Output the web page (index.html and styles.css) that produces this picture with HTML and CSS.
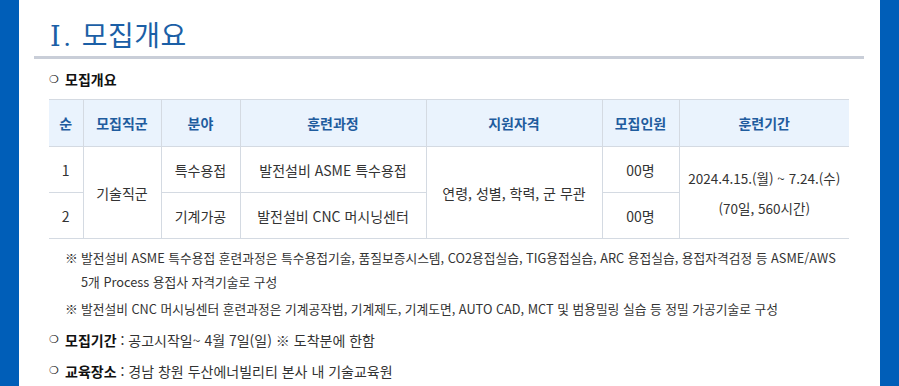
FILE: index.html
```html
<!DOCTYPE html>
<html lang="ko">
<head>
<meta charset="utf-8">
<link rel="stylesheet" href="styles.css">
</head>
<body>
<div class="page">
  <div class="bar"></div>
  <main class="content">
    <h1 class="title"><span class="roman">Ⅰ.</span> 모집개요</h1>
    <div class="rule"></div>
    <div class="inner">
      <p class="sub"><span class="bullet">❍</span><b>모집개요</b></p>
      <table class="grid">
        <colgroup>
          <col class="c1"><col class="c2"><col class="c3"><col class="c4"><col class="c5"><col class="c6"><col class="c7">
        </colgroup>
        <thead>
          <tr><th>순</th><th>모집직군</th><th>분야</th><th>훈련과정</th><th>지원자격</th><th>모집인원</th><th>훈련기간</th></tr>
        </thead>
        <tbody>
          <tr>
            <td>1</td>
            <td rowspan="2">기술직군</td>
            <td>특수용접</td>
            <td>발전설비 ASME 특수용접</td>
            <td rowspan="2">연령, 성별, 학력, 군 무관</td>
            <td>00명</td>
            <td rowspan="2" class="period">2024.4.15.(월) ~ 7.24.(수)<br>(70일, 560시간)</td>
          </tr>
          <tr>
            <td>2</td>
            <td>기계가공</td>
            <td>발전설비 CNC 머시닝센터</td>
            <td>00명</td>
          </tr>
        </tbody>
      </table>
      <div class="notes">
        <p class="note"><span class="mark">※</span><span>발전설비 ASME 특수용접 훈련과정은 특수용접기술, 품질보증시스템, CO2용접실습, TIG용접실습, ARC 용접실습, 용접자격검정 등 ASME/AWS 5개 Process 용접사 자격기술로 구성</span></p>
        <p class="note"><span class="mark">※</span><span>발전설비 CNC 머시닝센터 훈련과정은 기계공작법, 기계제도, 기계도면, AUTO CAD, MCT 및 범용밀링 실습 등 정밀 가공기술로 구성</span></p>
      </div>
      <p class="info"><span class="bullet">❍</span><b>모집기간</b> : 공고시작일~ 4월 7일(일) ※ 도착분에 한함</p>
      <p class="info"><span class="bullet">❍</span><b>교육장소</b> : 경남 창원 두산에너빌리티 본사 내 기술교육원</p>
    </div>
  </main>
  <div class="bar"></div>
</div>
</body>
</html>
```

FILE: styles.css
```css
* { box-sizing: border-box; }
html, body { margin: 0; padding: 0; background: #fff; }
body {
  font-family: "Noto Sans CJK KR", "Noto Sans", sans-serif;
  color: #333;
  width: 899px;
  height: 386px;
  overflow: hidden;
}
.page {
  display: flex;
  height: 386px;
}
.bar {
  width: 19px;
  flex: none;
  background: #005eb8;
}
.content {
  flex: 1;
  padding: 0 16px 0 15px;
}
.title {
  margin: 0;
  padding: 16px 0 0 16px;
  height: 56px;
  font-size: 28px;
  line-height: 36px;
  font-weight: 400;
  color: #1b5fa6;
  letter-spacing: 0.5px;
}
.roman {
  font-family: "Liberation Serif", "DejaVu Serif", serif;
  font-size: 27px;
  letter-spacing: 3px;
}
.rule {
  height: 3px;
  background: #c9ced8;
}
.inner {
  padding: 0 15px;
}
.sub {
  margin: 0;
  padding-left: 0;
  height: 40px;
  display: flex;
  align-items: center;
  font-size: 14px;
  color: #111;
}
.bullet {
  font-family: "DejaVu Sans", sans-serif;
  font-size: 11px;
  width: 16px;
  color: #222;
}
.grid {
  width: 800px;
  border-collapse: collapse;
  table-layout: fixed;
  font-size: 14px;
  border-top: 1px solid #ccd0d6;
  border-bottom: 1px solid #ccd0d6;
}
.c1 { width: 34px; }
.c2 { width: 78px; }
.c3 { width: 79px; }
.c4 { width: 186px; }
.c5 { width: 176px; }
.c6 { width: 77px; }
.c7 { width: 170px; }
.grid th, .grid td {
  border: 1px solid #d4dae2;
  text-align: center;
  padding: 0;
}
.grid th:first-child, .grid td:first-child { border-left: none; }
.grid th:last-child, .grid td.period { border-right: none; }
.grid th {
  background: #eaf3fd;
  color: #1f5c9e;
  font-weight: 700;
  height: 47px;
}
.grid td {
  height: 46px;
  color: #333;
}
.period { line-height: 30px; font-size: 13.5px; }
.notes {
  padding: 7px 0 0 16px;
  font-size: 12.75px;
  color: #333;
  word-break: keep-all;
}
.note {
  margin: 0 0 3px;
  display: flex;
  line-height: 24px;
}
.mark {
  width: 16px;
  flex: none;
}
.info {
  margin: 0;
  height: 31px;
  display: flex;
  align-items: center;
  font-size: 14px;
  color: #333;
  white-space: pre;
}
.info b { color: #111; }
```
